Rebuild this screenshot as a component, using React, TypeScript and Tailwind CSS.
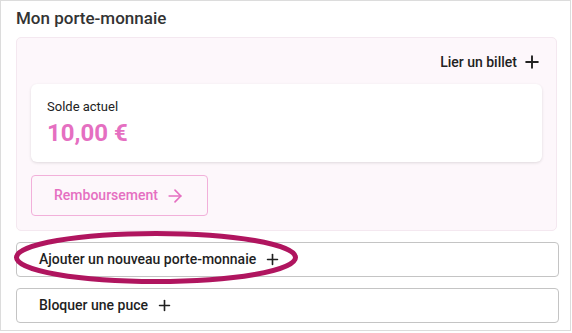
import React from "react";
import { Plus, ArrowRight } from "lucide-react";

export default function App() {
  return (
    <div className="relative w-[572px] h-[333px] bg-white" style={{ fontFamily: "Roboto, 'Liberation Sans', sans-serif" }}>
      <div className="w-[571px] h-[331px] border border-[#dcdcdc] pt-[5px] pl-[15px] flex flex-col">
        <div className="text-[17px] leading-[24px] font-medium text-[#333333]">Mon porte-monnaie</div>
        <div className="mt-[7px] w-[541px] rounded-[5px] border border-[#f4e8f0] bg-[#fdf7fb] p-[14px] flex flex-col">
          <div className="h-[20px] flex items-center justify-end gap-[5px]">
            <span className="text-[14px] leading-[20px] font-medium text-[#222222]">Lier un billet</span>
            <Plus size={20} strokeWidth={2.3} className="text-[#222222]" />
          </div>
          <div className="mt-[12px] rounded-[6px] bg-white shadow-[0_1px_3px_rgba(0,0,0,0.12)] pt-[14px] pb-[13px] pl-[16px] flex flex-col">
            <div className="text-[13px] leading-[18px] text-[#222222]">Solde actuel</div>
            <div className="mt-[1px] text-[24px] leading-[32px] font-bold text-[#e56fc1]">10,00 €</div>
          </div>
          <div className="mt-[13px] w-[177px] h-[41px] rounded-[4px] border border-[#f2b0da] flex items-center justify-center gap-[7px]">
            <span className="text-[14px] font-medium text-[#e56fc1]">Remboursement</span>
            <ArrowRight size={20} strokeWidth={2} className="text-[#e56fc1]" />
          </div>
        </div>
        <div className="mt-[11px] w-[543px] h-[35px] rounded-[4px] border border-[#c4c4c4] flex items-center pl-[22px] gap-[8px]">
          <span className="text-[14px] font-medium text-[#1f1f1f]">Ajouter un nouveau porte-monnaie</span>
          <Plus size={17} strokeWidth={2.3} className="text-[#1f1f1f]" />
        </div>
        <div className="mt-[11px] w-[543px] h-[35px] rounded-[4px] border border-[#c4c4c4] flex items-center pl-[22px] gap-[8px]">
          <span className="text-[14px] font-medium text-[#1f1f1f]">Bloquer une puce</span>
          <Plus size={17} strokeWidth={2.3} className="text-[#1f1f1f]" />
        </div>
      </div>
      <svg className="absolute left-[12px] top-[229px] pointer-events-none" width="290" height="58" viewBox="0 0 290 58">
        <ellipse cx="144" cy="28.5" rx="139.5" ry="24" fill="none" stroke="#b0155f" strokeWidth="5" />
      </svg>
    </div>
  );
}
